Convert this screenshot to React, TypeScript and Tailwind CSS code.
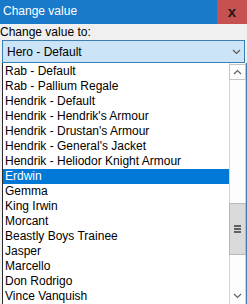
import React from "react";

const items = [
  "Rab - Default",
  "Rab - Pallium Regale",
  "Hendrik - Default",
  "Hendrik - Hendrik's Armour",
  "Hendrik - Drustan's Armour",
  "Hendrik - General's Jacket",
  "Hendrik - Heliodor Knight Armour",
  "Erdwin",
  "Gemma",
  "King Irwin",
  "Morcant",
  "Beastly Boys Trainee",
  "Jasper",
  "Marcello",
  "Don Rodrigo",
  "Vince Vanquish",
];

const selected = "Erdwin";

function Chevron({ up, className }: { up?: boolean; className?: string }) {
  return (
    <svg width="9" height="6" viewBox="0 0 9 6" className={className}>
      <path
        d={up ? "M1 5 L4.5 1.5 L8 5" : "M1 1 L4.5 4.5 L8 1"}
        fill="none"
        stroke="currentColor"
        strokeWidth="1.2"
      />
    </svg>
  );
}

export default function App() {
  return (
    <div
      className="w-[247px] h-[304px] overflow-hidden bg-[#f0f0f0] text-black"
      style={{ fontFamily: '"Liberation Sans", Arial, sans-serif' }}
    >
      <div className="h-[24px] flex items-stretch bg-[#1979ca]">
        <span className="pl-[3px] pt-[4px] text-[12px] leading-[15px] text-white">
          Change value
        </span>
        <div className="ml-auto w-[30px] bg-[#c75050] flex items-center justify-center">
          <span className="text-[15px] font-bold leading-none text-[#1a1a1a] -mt-[2px]">x</span>
        </div>
      </div>

      <div className="h-[15px] text-[12px] leading-[15px] pt-[1px]">Change value to:</div>

      <div className="mx-[2px] mt-[1px] h-[23px] border border-[#3c7fb1] bg-[#cce4f7] flex items-center pl-[4px] pr-[3px] text-[12px]">
        <span>Hero - Default</span>
        <Chevron className="ml-auto text-[#5a5a5a]" />
      </div>

      <div className="ml-[2px] h-[242px] flex bg-white border-l border-[#2c2c2c] border-r border-r-[#3c7fb1]">
        <div className="flex-1 pt-[1px]">
          {items.map((item) => (
            <div
              key={item}
              className={
                item === selected
                  ? "h-[15px] pl-[2px] text-[12px] leading-[15px] bg-[#0078d7] text-white"
                  : "h-[15px] pl-[2px] text-[12px] leading-[15px]"
              }
            >
              {item}
            </div>
          ))}
        </div>
        <div className="w-[17px] flex flex-col pt-[1px] pb-[1px] border-x border-[#d4d4d4] bg-[#fdfdfd]">
          <div className="h-[16px] border border-[#c4c4c4] -mx-px flex items-center justify-center text-[#606060]">
            <Chevron up />
          </div>
          <div className="h-[123px]" />
          <div className="h-[52px] -mx-px bg-[#dadada] border border-[#b8b8b8] flex flex-col items-center justify-center gap-[1px]">
            <div className="w-[7px] h-[2px] bg-[#606060]" />
            <div className="w-[7px] h-[2px] bg-[#606060]" />
            <div className="w-[7px] h-[2px] bg-[#606060]" />
          </div>
          <div className="flex-1" />
          <div className="h-[16px] flex items-center justify-center text-[#606060]">
            <Chevron />
          </div>
        </div>
      </div>
    </div>
  );
}
